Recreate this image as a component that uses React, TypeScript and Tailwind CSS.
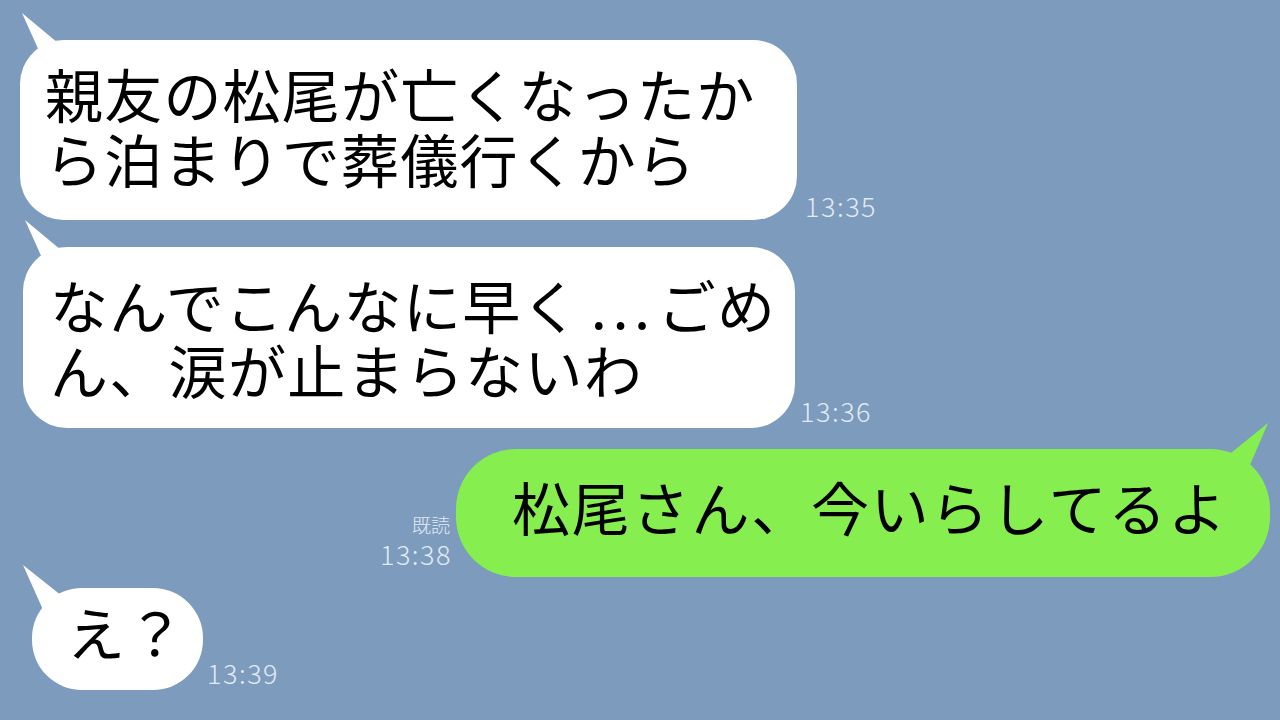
import React from "react";

const jp = { fontFamily: '"Noto Sans CJK JP", "Noto Sans", sans-serif' };

function TailLeft({ color, points }: { color: string; points: string }) {
  return (
    <svg
      className="absolute left-0 top-0 overflow-visible pointer-events-none"
      width="1"
      height="1"
    >
      <polygon points={points} fill={color} />
    </svg>
  );
}

function Time({ t, className = "" }: { t: string; className?: string }) {
  return (
    <div
      className={`text-[27px] leading-none font-light tracking-[1.5px] text-[#e2eaf3] whitespace-nowrap ${className}`}
      style={jp}
    >
      {t}
    </div>
  );
}

export default function App() {
  return (
    <div
      className="w-[1280px] h-[720px] bg-[#7c9bbd] overflow-hidden flex flex-col text-black"
      style={jp}
    >
      {/* Row 1 */}
      <div className="flex items-end gap-[8px] ml-[20px] mt-[40px]">
        <div className="relative w-[777px] h-[180px] bg-white rounded-[44px] pl-[25px] pt-[21px]">
          <TailLeft color="#ffffff" points="2,-27 24,22 44,8" />
          <div className="relative text-[58px] leading-[65px] tracking-[1.2px] whitespace-nowrap">
            親友の松尾が亡くなったか
            <br />
            ら泊まりで葬儀行くから
          </div>
        </div>
        <Time t="13:35" className="mb-[1px]" />
      </div>

      {/* Row 2 */}
      <div className="flex items-end gap-[5px] ml-[23px] mt-[27px]">
        <div className="relative w-[772px] h-[181px] bg-white rounded-[44px] pl-[27px] pt-[25px]">
          <TailLeft color="#ffffff" points="2,-27 24,22 44,8" />
          <div className="relative text-[58px] leading-[65px] tracking-[1.3px] whitespace-nowrap">
            なんでこんなに早く
            <span className="inline-block w-[77px] pl-[10px] tracking-[5.5px]">...</span>
            ごめ
            <br />
            ん、涙が止まらないわ
          </div>
        </div>
        <Time t="13:36" className="mb-[4px]" />
      </div>

      {/* Row 3 (sent) */}
      <div className="flex items-end justify-end gap-[4px] mr-[10px] mt-[21px]">
        <div className="flex flex-col items-end mb-[10px]">
          <div className="text-[19px] leading-none font-light text-[#e2eaf3] mb-[6px] mr-[2px]">
            既読
          </div>
          <Time t="13:38" />
        </div>
        <div className="relative w-[814px] h-[128px] bg-[#86ef4f] rounded-[60px] pl-[56px] pt-[25px]">
          <svg
            className="absolute right-0 top-0 overflow-visible pointer-events-none"
            width="1"
            height="1"
          >
            <polygon points="-2,-26 -44,8 -26,30" fill="#86ef4f" transform="translate(1,0)" />
          </svg>
          <div className="relative text-[58px] leading-[65px] tracking-[1.8px] whitespace-nowrap">
            松尾さん、今いらしてるよ
          </div>
        </div>
      </div>

      {/* Row 4 */}
      <div className="flex items-end gap-[4px] ml-[32px] mt-[11px]">
        <div className="relative w-[171px] h-[102px] bg-white rounded-[50px] pl-[35px] pt-[11px]">
          <TailLeft color="#ffffff" points="-9,-23 12,24 30,8" />
          <div className="relative text-[58px] leading-[65px] tracking-[1.6px] whitespace-nowrap">
            え？
          </div>
        </div>
        <Time t="13:39" className="mb-[4px]" />
      </div>
    </div>
  );
}
